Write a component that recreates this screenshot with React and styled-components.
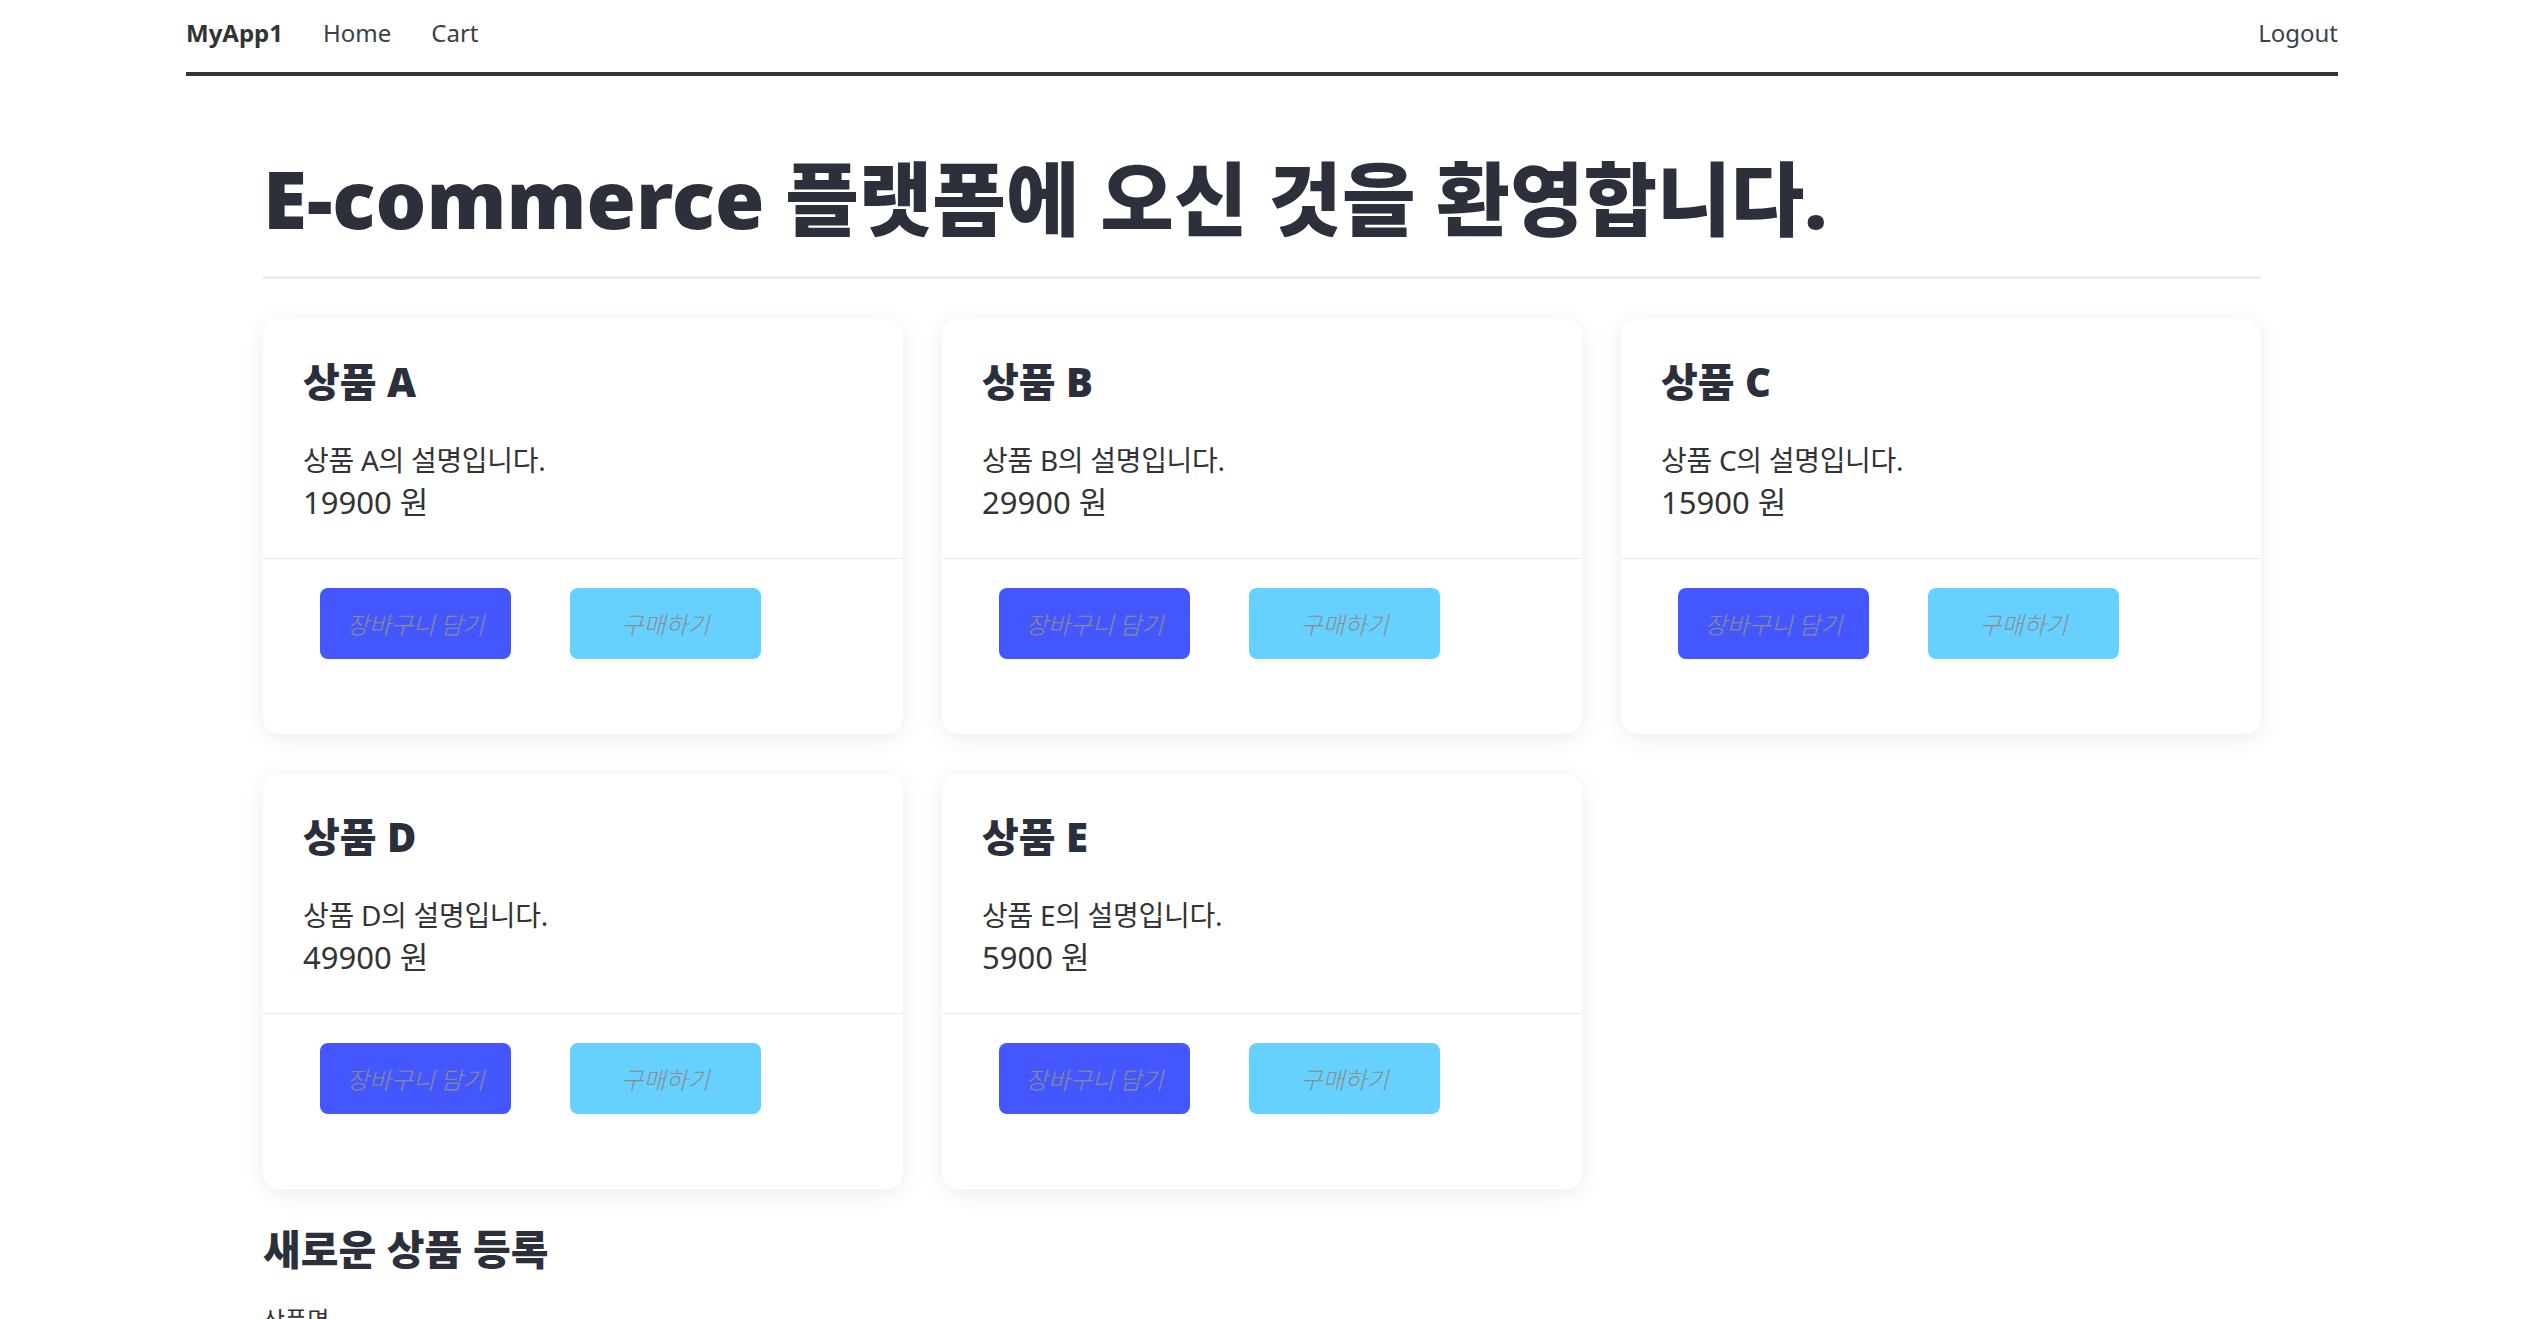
import React from 'react';
import styled, { createGlobalStyle } from 'styled-components';

const GlobalStyle = createGlobalStyle`
body {
  margin: 0;
  background: #ffffff;
  font-family: "Noto Sans", "Noto Sans CJK KR", sans-serif;
  color: #333333;
}
`;

const NavBar = styled.nav`
width: 2152px;
height: 76px;
margin: 0 auto;
box-sizing: border-box;
padding-bottom: 7px;
display: flex;
align-items: center;
justify-content: space-between;
border-bottom: 4px solid #333333;
`;

const NavGroup = styled.div`
display: flex;
align-items: center;
gap: 40px;
`;

const NavLink = styled.a`
font-size: 24px;
line-height: 36px;
color: ${props => (props.brand ? '#333333' : '#3b404b')};
font-weight: ${props => (props.brand ? 700 : 400)};
text-decoration: none;
cursor: pointer;
`;

const Main = styled.main`
width: 1998px;
margin: 0 auto;
`;

const PageTitle = styled.h1`
margin: 74px 0 0;
font-size: 80px;
line-height: 96px;
font-weight: 900;
color: #2c303a;
`;

const Rule = styled.div`
height: 3px;
margin-top: 30px;
background: #efeff1;
`;

const CardGrid = styled.div`
margin-top: 40px;
display: grid;
grid-template-columns: repeat(3, 1fr);
gap: 40px 39px;
`;

const Card = styled.div`
background: #ffffff;
border-radius: 16px;
box-shadow: 0 4px 22px rgba(0, 0, 0, 0.08);
overflow: hidden;
`;

const CardBody = styled.div`
padding: 40px 40px 34px;
`;

const CardTitle = styled.h2`
margin: 0 0 35px;
font-size: 40px;
line-height: 46px;
font-weight: 900;
color: #2b2f3b;
`;

const Description = styled.div`
font-size: 28px;
line-height: 40px;
letter-spacing: -0.3px;
color: #333333;
`;

const Price = styled.div`
font-size: 31px;
line-height: 44px;
color: #333333;
`;

const CardFooter = styled.div`
border-top: 1px solid #ececec;
padding: 29px 0 75px 57px;
display: flex;
gap: 59px;
`;

const ActionButton = styled.button`
width: 191px;
height: 71px;
border: none;
border-radius: 8px;
background: ${props => (props.variant === 'buy' ? '#66d1ff' : '#4457ff')};
color: #8c8c8c;
font-family: "Noto Sans CJK KR", sans-serif;
font-size: 24px;
font-style: italic;
font-weight: 300;
cursor: pointer;
`;

const SectionTitle = styled.h2`
margin: 37px 0 0;
font-size: 41px;
line-height: 46px;
font-weight: 900;
color: #2c303a;
`;

const Form = styled.form`
margin-top: 28px;
display: flex;
flex-direction: column;
gap: 12px;
width: 640px;
`;

const Label = styled.label`
font-size: 24px;
line-height: 40px;
color: #333333;
`;

const Input = styled.input`
height: 56px;
border: 1px solid #cccccc;
border-radius: 8px;
font-size: 24px;
padding: 0 16px;
`;

const products = [
  { name: '상품 A', desc: '상품 A의 설명입니다.', price: 19900 },
  { name: '상품 B', desc: '상품 B의 설명입니다.', price: 29900 },
  { name: '상품 C', desc: '상품 C의 설명입니다.', price: 15900 },
  { name: '상품 D', desc: '상품 D의 설명입니다.', price: 49900 },
  { name: '상품 E', desc: '상품 E의 설명입니다.', price: 5900 },
];

const ProductCard = ({ product }) => (
  <Card>
    <CardBody>
      <CardTitle>{product.name}</CardTitle>
      <Description>{product.desc}</Description>
      <Price>{`${product.price} 원`}</Price>
    </CardBody>
    <CardFooter>
      <ActionButton>장바구니 담기</ActionButton>
      <ActionButton variant='buy'>구매하기</ActionButton>
    </CardFooter>
  </Card>
);

const App = () => {
  return (
    <React.Fragment>
      <GlobalStyle />
      <NavBar>
        <NavGroup>
          <NavLink brand>MyApp1</NavLink>
          <NavLink>Home</NavLink>
          <NavLink>Cart</NavLink>
        </NavGroup>
        <NavLink>Logout</NavLink>
      </NavBar>
      <Main>
        <PageTitle>E-commerce 플랫폼에 오신 것을 환영합니다.</PageTitle>
        <Rule />
        <CardGrid>
          {products.map((p) => (
            <ProductCard key={p.name} product={p} />
          ))}
        </CardGrid>
        <SectionTitle>새로운 상품 등록</SectionTitle>
        <Form onSubmit={(e) => e.preventDefault()}>
          <Label>상품명</Label>
          <Input type='text' />
        </Form>
      </Main>
    </React.Fragment>
  );
};

export default App;
